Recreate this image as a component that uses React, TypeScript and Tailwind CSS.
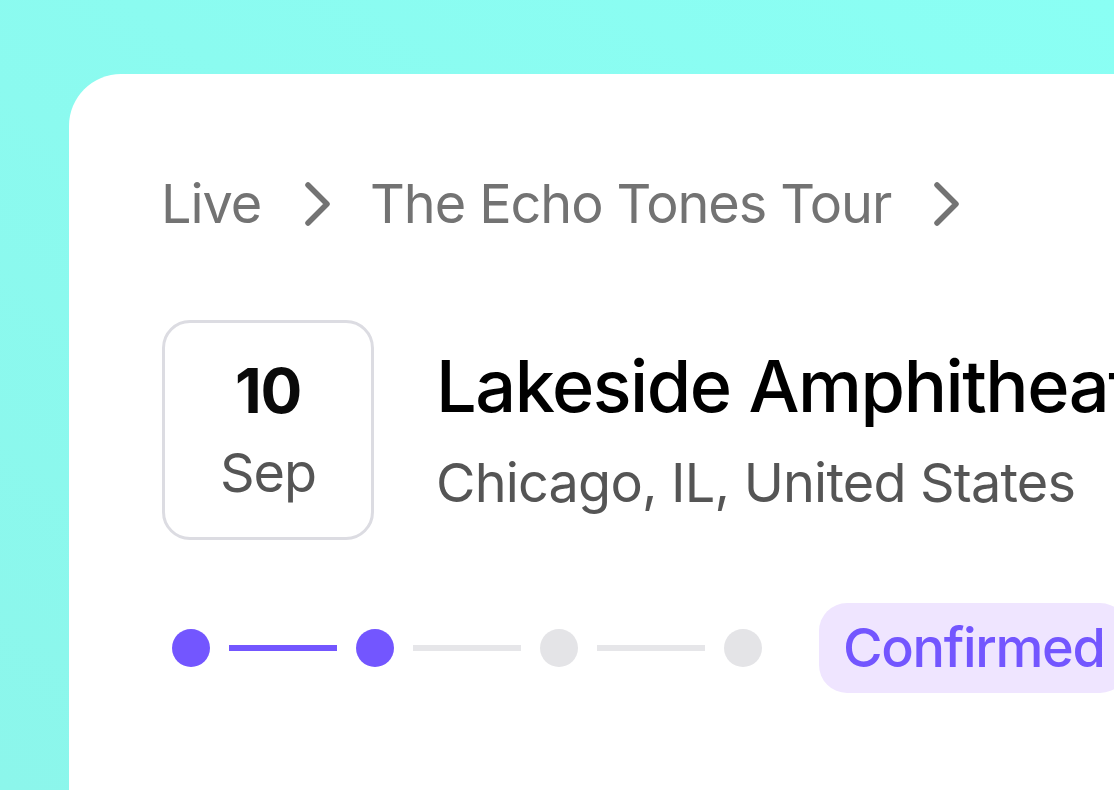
import React from "react";

function Chevron() {
  return (
    <svg width="32" height="46" viewBox="0 0 32 46" fill="none" className="shrink-0">
      <path d="M6 4 L25 23 L6 42" stroke="#737373" strokeWidth="5.5" strokeLinecap="round" strokeLinejoin="round" />
    </svg>
  );
}

export default function App() {
  const font = { fontFamily: "Inter, 'Noto Sans', sans-serif" };
  return (
    <div
      className="w-[1114px] h-[790px] overflow-hidden bg-gradient-to-bl from-[#8afff4] to-[#8cf6eb] pt-[74px] pl-[69px]"
      style={font}
    >
      <div className="bg-white rounded-tl-[52px] h-[716px] w-[1045px] pl-[93px] pt-[100px] overflow-hidden">
        {/* breadcrumb */}
        <div className="flex items-center h-[60px] text-[54px] leading-none tracking-[-0.02em] text-[#737373] whitespace-nowrap">
          <span className="-ml-[1px]">Live</span>
          <span className="ml-[41px]"><Chevron /></span>
          <span className="ml-[36px]">The Echo Tones Tour</span>
          <span className="ml-[40px]"><Chevron /></span>
        </div>

        {/* event row */}
        <div className="flex items-start mt-[86px] whitespace-nowrap">
          <div className="w-[212px] h-[220px] shrink-0 border-[3px] border-[#dcdce2] rounded-[28px] flex flex-col items-center justify-center gap-[24px]">
            <span className="text-[62px] leading-none font-bold tracking-[-0.02em] text-[#0a0a0a]">10</span>
            <span className="text-[54px] leading-none tracking-[-0.02em] text-[#555555]">Sep</span>
          </div>
          <div className="ml-[62px] pt-[30px] flex flex-col gap-[34px]">
            <span className="text-[72px] leading-none font-medium tracking-[-0.02em] text-black">Lakeside Amphitheater</span>
            <span className="text-[54px] leading-none tracking-[-0.015em] text-[#555555]">Chicago, IL, United States</span>
          </div>
        </div>

        {/* progress */}
        <div className="flex items-center mt-[63px] pl-[10px] whitespace-nowrap">
          <div className="w-[38px] h-[38px] rounded-full bg-[#7356ff] shrink-0" />
          <div className="w-[108px] h-[6px] mx-[19px] bg-[#7356ff] shrink-0" />
          <div className="w-[38px] h-[38px] rounded-full bg-[#7356ff] shrink-0" />
          <div className="w-[108px] h-[6px] mx-[19px] bg-[#e6e6e9] shrink-0" />
          <div className="w-[38px] h-[38px] rounded-full bg-[#e4e4e7] shrink-0" />
          <div className="w-[108px] h-[6px] mx-[19px] bg-[#e6e6e9] shrink-0" />
          <div className="w-[38px] h-[38px] rounded-full bg-[#e4e4e7] shrink-0" />
          <div className="ml-[57px] h-[90px] rounded-[28px] bg-[#efe5ff] px-[24px] flex items-center shrink-0">
            <span className="text-[54px] leading-none font-medium tracking-[-0.025em] text-[#7356ff]">Confirmed</span>
          </div>
        </div>
      </div>
    </div>
  );
}
